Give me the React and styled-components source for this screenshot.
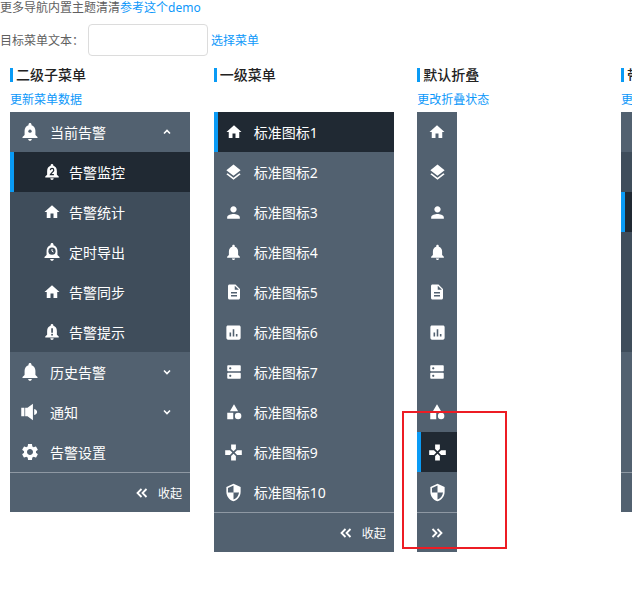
import React from 'react';
import styled, { createGlobalStyle } from 'styled-components';

const GlobalStyle = createGlobalStyle`
  html, body {
    margin: 0;
    padding: 0;
    background: #fff;
  }
  body {
    font-family: "Noto Sans", "Noto Sans CJK SC", sans-serif;
    font-size: 12px;
    color: #5f5f5f;
  }
`;

const Page = styled.div`
  position: relative;
  width: 632px;
  height: 592px;
  overflow: hidden;
`;
const Intro = styled.div`
  height: 16px;
  line-height: 16px;
  white-space: nowrap;
`;
const Link = styled.a`
  color: #0d98fa;
  cursor: pointer;
`;
const FormRow = styled.div`
  display: flex;
  align-items: center;
  height: 32px;
  margin-top: 8px;
`;
const FormLabel = styled.label`
  width: 88px;
`;
const TextInput = styled.input`
  box-sizing: border-box;
  width: 120px;
  height: 32px;
  margin-right: 3px;
  border: 1px solid #dcdcdc;
  border-radius: 4px;
  outline: none;
`;
const Columns = styled.div`
  display: flex;
  padding: 12px 0 0 10px;
`;
const Column = styled.section`
  flex: 0 0 203.67px;
`;
const Title = styled.h4`
  margin: 0 0 10px;
  padding-left: 3px;
  height: 14px;
  line-height: 14px;
  border-left: 3px solid #0a9bf5;
  font-size: 14px;
  font-weight: 500;
  color: #222;
  white-space: nowrap;
`;
const Action = styled.div`
  height: 14px;
  line-height: 16px;
  margin-bottom: 6px;
  white-space: nowrap;
`;
const Panel = styled.nav`
  width: ${(p) => (p.$collapsed ? '40px' : '180px')};
  background: #526170;
  color: #fff;
  font-size: 14px;
`;
const Row = styled.div`
  box-sizing: border-box;
  display: flex;
  align-items: center;
  height: 40px;
  white-space: nowrap;
  overflow: hidden;
  background: ${(p) => (p.$active ? '#202933' : 'transparent')};
  border-left: 4px solid ${(p) => (p.$active ? '#0a9bf5' : 'transparent')};
`;
const IconSlot = styled.span`
  flex: 0 0 32px;
  display: flex;
  justify-content: center;
  align-items: center;
`;
const SubIconSlot = styled(IconSlot)`
  margin-left: 22px;
  flex-basis: 32px;
`;
const Label = styled.span`
  margin-left: 4px;
  flex: 1;
`;
const SubLabel = styled.span`
  margin-left: 1px;
`;
const Caret = styled.span`
  display: flex;
  width: 10px;
  margin-right: 18px;
`;
const SubList = styled.div`
  background: #3f4d5b;
`;
const Footer = styled.div`
  box-sizing: border-box;
  display: flex;
  align-items: center;
  justify-content: ${(p) => (p.$collapsed ? 'center' : 'flex-end')};
  gap: 10px;
  height: 40px;
  padding-right: ${(p) => (p.$collapsed ? '0' : '8px')};
  border-top: 1px solid #8e98a3;
  font-size: 12px;
`;
const RedBox = styled.div`
  position: absolute;
  left: 402px;
  top: 411px;
  box-sizing: border-box;
  width: 105px;
  height: 138px;
  border: 2px solid #ed1c24;
`;

const BELL =
  'M12 22.5c1.2 0 2.2-1 2.2-2.2H9.8c0 1.2 1 2.2 2.2 2.2zM18.5 15.5v-5c0-3.3-1.8-6-4.7-6.7V3c0-1-.8-1.8-1.8-1.8s-1.8.8-1.8 1.8v.8c-2.9.7-4.700 3.400-4.700 6.700v5L3 18v1.300h18V18l-2.500-2.500z';

const paths = {
  home: 'M10 20v-6h4v6h5v-8h3L12 3 2 12h3v8z',
  layers:
    'M11.99 18.54l-7.37-5.73L3 14.07l9 7 9-7-1.63-1.27-7.38 5.74zM12 16l7.36-5.73L21 9l-9-7-9 7 1.63 1.27L12 16z',
  user: 'M12 12c2.21 0 4-1.79 4-4s-1.79-4-4-4-4 1.79-4 4 1.79 4 4 4zm0 2c-2.67 0-8 1.34-8 4v2h16v-2c0-2.66-5.33-4-8-4z',
  bell: BELL,
  doc: 'M14 2H6c-1.1 0-1.99.9-1.99 2L4 20c0 1.1.89 2 1.99 2H18c1.1 0 2-.9 2-2V8l-6-6zm2 16H8v-2h8v2zm0-4H8v-2h8v2zm-3-5V3.5L18.500 9H13z',
  chart:
    'M19 3H5c-1.1 0-2 .9-2 2v14c0 1.1.9 2 2 2h14c1.1 0 2-.9 2-2V5c0-1.1-.9-2-2-2zM9 17H7v-5h2v5zm4 0h-2V8h2v9zm4 0h-2v-3h2v3z',
  server:
    'M20 13H4c-.55 0-1 .45-1 1v6c0 .55.45 1 1 1h16c.55 0 1-.45 1-1v-6c0-.55-.45-1-1-1zM7 18.500c-.8 0-1.500-.7-1.500-1.500s.7-1.500 1.500-1.500 1.500.7 1.500 1.500-.7 1.500-1.500 1.500zM20 3H4c-.55 0-1 .45-1 1v6c0 .55.45 1 1 1h16c.55 0 1-.45 1-1V4c0-.55-.45-1-1-1zM7 8.500c-.8 0-1.500-.7-1.500-1.500s.7-1.500 1.500-1.500 1.500.7 1.500 1.500-.7 1.500-1.500 1.500z',
  shapes:
    'M12 1.500L17.500 11h-11zM3 13h8v8.500H3zM17.500 13a4.300 4.300 0 1 1 0 8.600 4.300 4.300 0 0 1 0-8.600z',
  pad: 'M15 7.500V2H9v5.500l3 3 3-3zM7.500 9H1.500v6h6l3-3-3-3zM9 16.500V22h6v-5.500l-3-3-3 3zM16.500 9l-3 3 3 3h6V9h-6z',
  shield:
    'M12 1L3 5v6c0 5.550 3.840 10.740 9 12 5.160-1.260 9-6.450 9-12V5l-9-4zm0 10.990h7c-.53 4.120-3.280 7.790-7 8.940V12H5V6.300l7-3.110v8.800z',
  horn: 'M1.500 7h3.800v10H1.500zM6.200 7H9L15.500 2v20L9 17H6.200zM17 8.500c2.500.5 3.500 2 3.500 3.500s-1 3-3.500 3.500z',
  gear: 'M19.140 12.940c.04-.3.060-.61.060-.94 0-.32-.02-.64-.07-.94l2.030-1.580c.18-.14.230-.41.120-.61l-1.920-3.320c-.12-.22-.37-.29-.59-.22l-2.390.96c-.5-.38-1.030-.7-1.620-.94l-.36-2.540c-.04-.24-.24-.41-.48-.41h-3.840c-.24 0-.43.17-.47.41l-.36 2.540c-.59.24-1.130.57-1.620.94l-2.390-.96c-.22-.08-.47 0-.59.22L2.740 8.870c-.12.21-.08.47.12.61l2.030 1.580c-.05.3-.09.63-.09.94s.02.64.07.94l-2.030 1.580c-.18.14-.23.41-.12.61l1.920 3.320c.12.22.37.29.59.22l2.390-.96c.5.38 1.030.7 1.620.94l.36 2.540c.05.24.24.41.48.41h3.840c.24 0 .44-.17.47-.41l.36-2.540c.59-.24 1.130-.56 1.620-.94l2.390.96c.22.08.47 0 .59-.22l1.920-3.320c.12-.22.07-.47-.12-.61l-2.010-1.580zM12 15.600c-1.980 0-3.600-1.620-3.600-3.600s1.620-3.600 3.600-3.600 3.600 1.620 3.600 3.600-1.620 3.600-3.600 3.600z',
};

const sizes = { home: 18, layers: 19, user: 19, bell: 20, doc: 18, chart: 19, server: 18, shapes: 18, pad: 19, shield: 19, horn: 20, gear: 20 };

// small marks punched into the bell icons, drawn in the row's own colour
const BellMark = ({ mark, color }) => {
  if (mark === 'dot') return <circle cx="12" cy="11" r="2" fill={color} />;
  if (mark === 'alert') {
    return (
      <g fill={color}>
        <rect x="11" y="7" width="2.200" height="6" />
        <rect x="11" y="14.500" width="2.200" height="2.200" />
      </g>
    );
  }
  if (mark === 'two') {
    return <path d="M9.800 9.500c.3-3 4.500-3 4.500 0 0 1.800-3 3.500-4.300 6h4.500" fill="none" stroke={color} strokeWidth="1.700" />;
  }
  if (mark === 'clock') {
    return (
      <g>
        <circle cx="12" cy="11" r="4.300" fill={color} />
        <path d="M12 8.500V11l1.800 1" fill="none" stroke="#fff" strokeWidth="1.200" />
      </g>
    );
  }
  return null;
};

const Icon = ({ name, mark, markColor, size }) => {
  const s = size || sizes[name];
  return (
    <svg width={s} height={s} viewBox="0 0 24 24" fill="#fff">
      <path d={paths[name]} />
      {mark && <BellMark mark={mark} color={markColor} />}
    </svg>
  );
};

const Chevron = ({ up }) => (
  <svg width="10" height="10" viewBox="0 0 10 10" fill="none" stroke="#fff" strokeWidth="1.600">
    <path d={up ? 'M2 6.500L5 3.500l3 3' : 'M2 3.500l3 3 3-3'} />
  </svg>
);

const DoubleChevron = ({ right }) => (
  <svg width="12" height="10" viewBox="0 0 12 10" fill="none" stroke="#fff" strokeWidth="1.800">
    <path d={right ? 'M1.500 1l4 4-4 4M6.500 1l4 4-4 4' : 'M5.500 1l-4 4 4 4M10.500 1l-4 4 4 4'} />
  </svg>
);

const alarmMenu = [
  {
    name: '当前告警',
    icon: 'bell',
    mark: 'dot',
    open: true,
    children: [
      { name: '告警监控', icon: 'bell', mark: 'two', size: 18 },
      { name: '告警统计', icon: 'home', size: 18 },
      { name: '定时导出', icon: 'bell', mark: 'clock', size: 20 },
      { name: '告警同步', icon: 'home', size: 18 },
      { name: '告警提示', icon: 'bell', mark: 'alert', size: 18 },
    ],
  },
  { name: '历史告警', icon: 'bell', more: true },
  { name: '通知', icon: 'horn', more: true },
  { name: '告警设置', icon: 'gear' },
];

const iconNames = ['home', 'layers', 'user', 'bell', 'doc', 'chart', 'server', 'shapes', 'pad', 'shield'];
const iconMenu = iconNames.map((icon, i) => ({
  name: `标准图标${i + 1}`,
  icon,
  size: icon === 'bell' ? 17 : undefined,
}));

const Menu = ({ items, activeKey, collapsed }) => (
  <Panel $collapsed={collapsed}>
    {items.map((item) => (
      <div key={item.name}>
        <Row $active={activeKey === item.name}>
          <IconSlot>
            <Icon name={item.icon} mark={item.mark} size={item.size} markColor="#526170" />
          </IconSlot>
          {!collapsed && <Label>{item.name}</Label>}
          {!collapsed && (item.open || item.more) && (
            <Caret>
              <Chevron up={item.open} />
            </Caret>
          )}
        </Row>
        {item.children && (
          <SubList>
            {item.children.map((sub) => {
              const active = activeKey === sub.name;
              return (
                <Row key={sub.name} $active={active}>
                  <SubIconSlot>
                    <Icon name={sub.icon} mark={sub.mark} size={sub.size} markColor={active ? '#202933' : '#3f4d5b'} />
                  </SubIconSlot>
                  <SubLabel>{sub.name}</SubLabel>
                </Row>
              );
            })}
          </SubList>
        )}
      </div>
    ))}
    <Footer $collapsed={collapsed}>
      <DoubleChevron right={collapsed} />
      {!collapsed && <span>收起</span>}
    </Footer>
  </Panel>
);

export default function App() {
  return (
    <Page>
      <GlobalStyle />
      <Intro>
        更多导航内置主题清清
        <Link>参考这个demo</Link>
      </Intro>
      <FormRow>
        <FormLabel>目标菜单文本：</FormLabel>
        <TextInput />
        <Link>选择菜单</Link>
      </FormRow>
      <Columns>
        <Column>
          <Title>二级子菜单</Title>
          <Action>
            <Link>更新菜单数据</Link>
          </Action>
          <Menu items={alarmMenu} activeKey="告警监控" />
        </Column>
        <Column>
          <Title>一级菜单</Title>
          <Action />
          <Menu items={iconMenu} activeKey="标准图标1" />
        </Column>
        <Column>
          <Title>默认折叠</Title>
          <Action>
            <Link>更改折叠状态</Link>
          </Action>
          <Menu items={iconMenu} activeKey="标准图标9" collapsed />
        </Column>
        <Column>
          <Title>带状态菜单</Title>
          <Action>
            <Link>更新菜单数据</Link>
          </Action>
          <Menu items={alarmMenu} activeKey="告警统计" />
        </Column>
      </Columns>
      <RedBox />
    </Page>
  );
}
